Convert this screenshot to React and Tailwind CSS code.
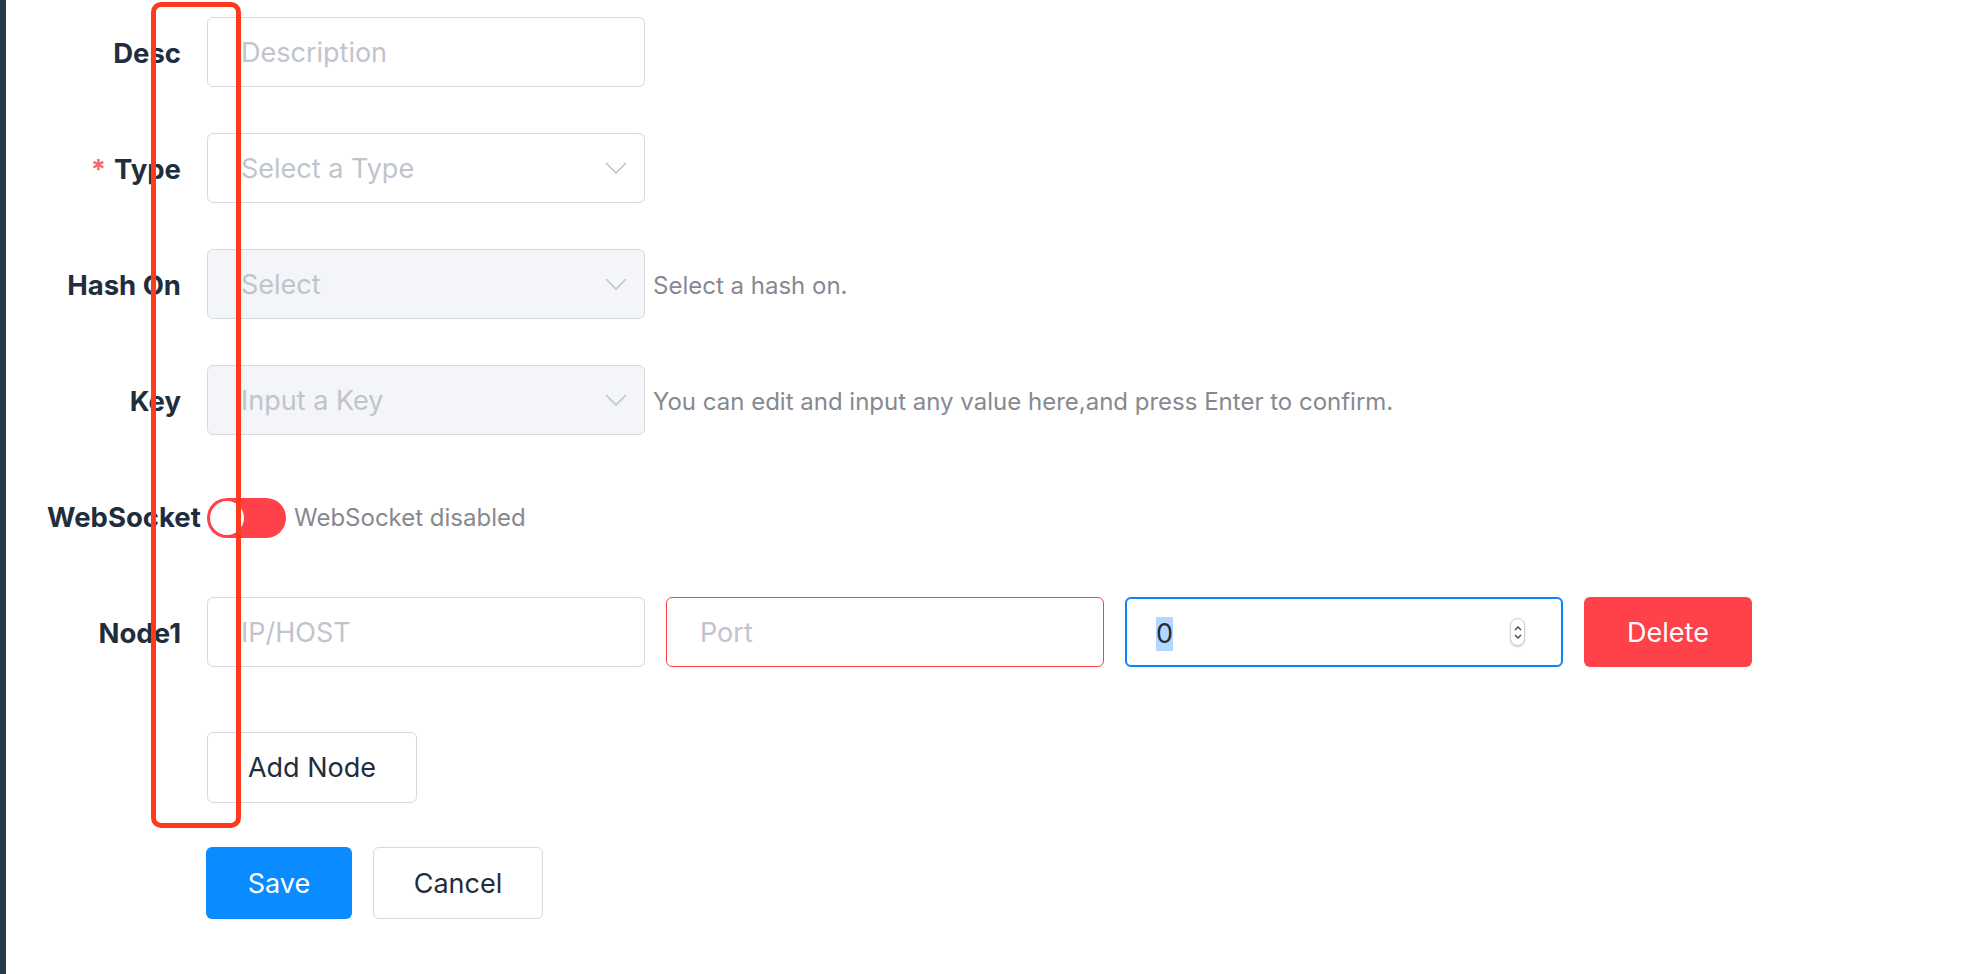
import React from "react";

const font = { fontFamily: "Inter, 'Noto Sans', sans-serif" };

const Chevron = () => (
  <svg width="22" height="12" viewBox="0 0 22 12" fill="none" className="absolute right-[17px] top-1/2 -translate-y-1/2">
    <path d="M1 1 L11 11 L21 1" stroke="#c0c4cc" strokeWidth="1.6" />
  </svg>
);

const Label = ({ children, required }) => (
  <div className="w-[160px] shrink-0 pr-[26px] pt-[3px] text-right whitespace-nowrap text-[27.5px] font-bold text-[#1f2d3d]">
    {required && <span className="mr-[8px] text-[#f56c6c]">*</span>}
    {children}
  </div>
);

const Row = ({ label, required, children, className = "" }) => (
  <div className={`flex h-[70px] items-center ${className}`}>
    <Label required={required}>{label}</Label>
    {children}
  </div>
);

const Box = ({ children, disabled, select, className = "" }) => (
  <div
    className={`relative flex h-[70px] w-[438px] shrink-0 items-center rounded-[6px] border px-[33px] pt-[3px] text-[27px] ${
      disabled ? "bg-[#f3f5f8]" : "bg-white"
    } ${className || "border-[#d6d9e0]"}`}
  >
    {children}
    {select && <Chevron />}
  </div>
);

const Placeholder = ({ children }) => <span className="text-[#c0c4cc]">{children}</span>;

const Help = ({ children }) => (
  <span className="ml-[8px] pt-[3px] whitespace-nowrap text-[24px] text-[#86898f]">{children}</span>
);

const Spinner = () => (
  <div className="absolute right-[36px] top-1/2 flex h-[28px] w-[15px] -translate-y-1/2 flex-col items-center justify-center gap-[3px] rounded-full border border-[#cfcfcf] bg-white shadow-[0_1px_2px_rgba(0,0,0,0.2)]">
    <svg width="8" height="5" viewBox="0 0 8 5"><path d="M1 4 L4 1 L7 4" stroke="#444" strokeWidth="1.4" fill="none" /></svg>
    <svg width="8" height="5" viewBox="0 0 8 5"><path d="M1 1 L4 4 L7 1" stroke="#444" strokeWidth="1.4" fill="none" /></svg>
  </div>
);

export default function App() {
  return (
    <div className="relative flex h-[974px] w-full bg-white" style={font}>
      <div className="h-full w-[6px] shrink-0 bg-[#283a4b]" />
      <div className="flex flex-col pl-[41px] pt-[17px]">
        <Row label="Desc" className="mb-[46px]">
          <Box>
            <Placeholder>Description</Placeholder>
          </Box>
        </Row>
        <Row label="Type" required className="mb-[46px]">
          <Box select>
            <Placeholder>Select a Type</Placeholder>
          </Box>
        </Row>
        <Row label="Hash On" className="mb-[46px]">
          <Box select disabled>
            <Placeholder>Select</Placeholder>
          </Box>
          <Help>Select a hash on.</Help>
        </Row>
        <Row label="Key" className="mb-[46px]">
          <Box select disabled>
            <Placeholder>Input a Key</Placeholder>
          </Box>
          <Help>You can edit and input any value here,and press Enter to confirm.</Help>
        </Row>
        <Row label="WebSocket" className="mb-[46px]">
          <div className="relative mt-[4px] h-[40px] w-[79px] shrink-0 rounded-full bg-[#ff414a]">
            <div className="absolute left-[3px] top-[3px] h-[34px] w-[34px] rounded-full bg-white" />
          </div>
          <Help>WebSocket disabled</Help>
        </Row>
        <Row label="Node1" className="mb-[65px]">
          <div className="flex items-center gap-[21px]">
            <Box>
              <Placeholder>IP/HOST</Placeholder>
            </Box>
            <Box className="border-[1.5px] border-[#ff414a]">
              <Placeholder>Port</Placeholder>
            </Box>
            <Box className="border-2 border-[#0a84ff] pl-[29px]">
              <span className="bg-[#b3d7fe] leading-[34px] text-[#1f2d3d]">0</span>
              <Spinner />
            </Box>
            <button className="h-[70px] w-[168px] rounded-[6px] bg-[#ff414a] pt-[3px] text-[27px] text-white">Delete</button>
          </div>
        </Row>
        <Row label="" className="mb-[45px]">
          <button className="h-[71px] w-[210px] rounded-[6px] border border-[#d6d9e0] bg-white pt-[3px] text-[27px] text-[#1f2d3d]">
            Add Node
          </button>
        </Row>
        <div className="flex h-[72px] items-center gap-[21px] pl-[159px]">
          <button className="h-[72px] w-[146px] rounded-[6px] bg-[#0a8bff] pt-[3px] text-[27px] text-white">Save</button>
          <button className="h-[72px] w-[170px] rounded-[6px] border border-[#d6d9e0] bg-white pt-[3px] text-[27px] text-[#1f2d3d]">
            Cancel
          </button>
        </div>
      </div>
      <div className="pointer-events-none absolute left-[151px] top-[2px] h-[826px] w-[90px] rounded-[10px] border-[5px] border-[#ff3a1e]" />
    </div>
  );
}
